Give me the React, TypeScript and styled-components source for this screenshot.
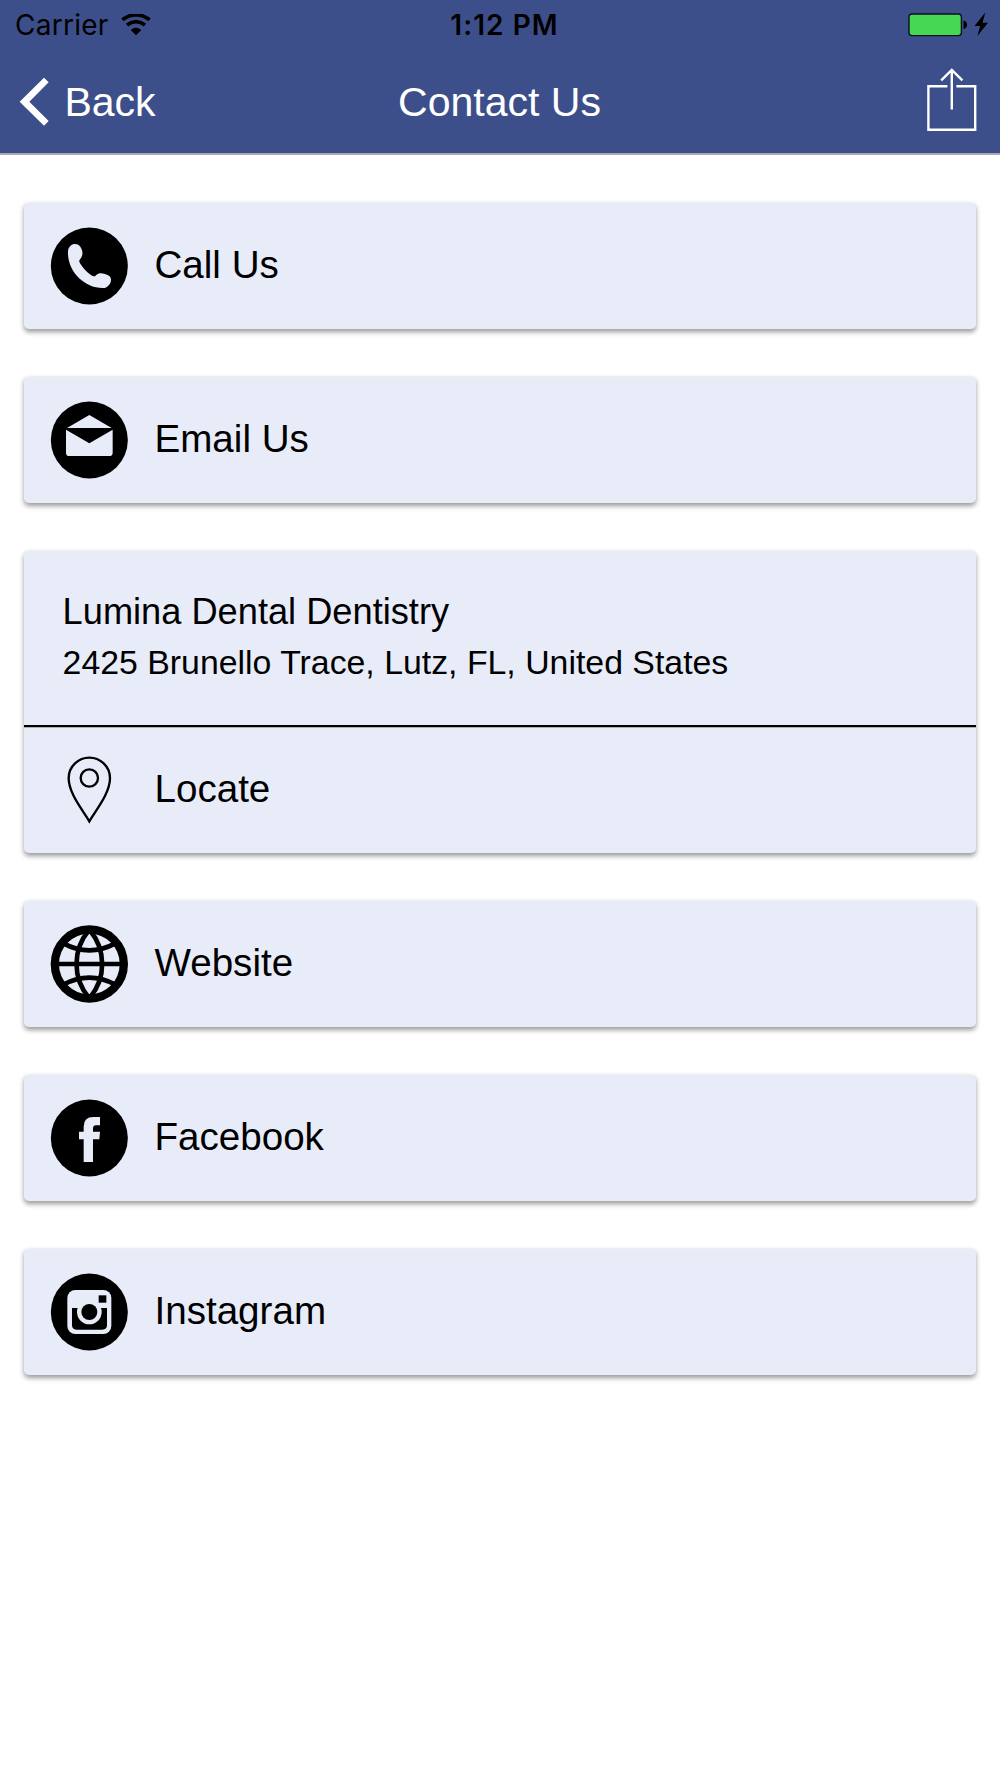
import React from "react";
import styled, { createGlobalStyle } from "styled-components";

const GlobalStyle = createGlobalStyle`
  *, *::before, *::after { box-sizing: border-box; }
  body {
    margin: 0;
    background: #fff;
    color: #000;
    font-family: "Liberation Sans", Arial, Helvetica, sans-serif;
  }
`;

const Screen = styled.div`
  width: 1000px;
  min-height: 1778px;
  background: #fff;
`;

const Header = styled.header`
  height: 155px;
  background: #3d4f8a;
  border-bottom: 2px solid #a9a9ae;
`;

const StatusBar = styled.div`
  display: grid;
  grid-template-columns: 1fr auto 1fr;
  align-items: center;
  height: 50px;
  padding: 0 12px 0 15px;
  font-family: Inter, Roboto, sans-serif;
  font-size: 28px;
  line-height: 48px;
`;

const StatusLeft = styled.div`
  display: flex;
  align-items: center;
  gap: 12px;
`;

const Carrier = styled.span`
  letter-spacing: 0.25px;
`;

const Clock = styled.span`
  font-weight: 600;
  letter-spacing: 1.05px;
  padding: 0 0 0 6px;
`;

const StatusRight = styled.div`
  display: flex;
  align-items: center;
  justify-content: flex-end;
`;

const NavBar = styled.nav`
  display: grid;
  grid-template-columns: 1fr auto 1fr;
  align-items: center;
  height: 103px;
  padding: 0 22px 0 19px;
  color: #fff;
  font-size: 41.06px;
`;

const NavButton = styled.button<{ $end?: boolean }>`
  display: flex;
  align-items: center;
  gap: 15.4px;
  justify-self: ${(p) => (p.$end ? "end" : "start")};
  padding: ${(p) => (p.$end ? "0 0 4px" : "0")};
  border: 0;
  background: none;
  color: inherit;
  font: inherit;
`;

const ButtonLabel = styled.span`
  padding-top: 2px;
`;

const Title = styled.h1`
  margin: 0;
  padding: 2px 0 0 2px;
  font-size: inherit;
  font-weight: 400;
`;

const List = styled.main`
  display: flex;
  flex-direction: column;
  gap: 47.9px;
  padding: 47.7px 24px 0;
`;

const Card = styled.section`
  border-radius: 4.8px;
  background: #e8ecf9;
  box-shadow: 0 2.4px 4.8px rgba(0, 0, 0, 0.4);
`;

const Row = styled.a`
  display: flex;
  align-items: center;
  gap: 26.2px;
  height: 126.1px;
  padding-left: 26.3px;
`;

const RowLabel = styled.span`
  font-size: 38.6px;
  line-height: 46px;
  padding-bottom: 1.8px;
`;

const Address = styled.div`
  height: 176.2px;
  padding: 35.4px 38.6px 0;
  border-bottom: 2px solid #000;
  box-shadow: 0 1px 0 rgba(0, 0, 0, 0.25);
`;

const AddressLine = styled.div<{ $size: number }>`
  font-size: ${(p) => p.$size}px;
  line-height: 51px;
  white-space: nowrap;
`;

const RoundIcon = styled.svg`
  display: block;
  flex: none;
  width: 78px;
  height: 78px;
`;

const Glyph = styled.svg`
  display: block;
  flex: none;
`;

const PAPER = "#e8ecf9";

const Disc = ({ children }: { children: React.ReactNode }) => (
  <RoundIcon viewBox="-118 -117 234 234">
    <circle r="115.5" />
    {children}
  </RoundIcon>
);

const PhoneIcon = () => (
  <Disc>
    <path
      fill={PAPER}
      d="M-64-44C-63-58-53-66-43-66C-31-66-25-57-22-47C-19-37-21-29-27-21Q-31-17-30-13C-24 2-2 25 13 31Q17 32 21 27C27 20 38 21 47 24C58 27 65 32 65 41C65 52 57 62 46 66C20 68-13 58-39 28C-57 6-65-20-64-44Z"
    />
  </Disc>
);

const MailIcon = () => (
  <Disc>
    <path fill={PAPER} d="M-67-36L0-75L67-36Z" />
    <path fill={PAPER} d="M-70-31L0 10L70-31V38Q70 48 60 48H-60Q-70 48-70 38Z" />
  </Disc>
);

const PinIcon = () => (
  <RoundIcon viewBox="-118 -117 234 234" fill="none" stroke="#000" strokeWidth="7">
    <path d="M0 94C-20 60-62 10-62-35C-62-72-32-97 0-97C32-97 62-72 62-35C62 10 20 60 0 94Z" />
    <circle cy="-36" r="26" />
  </RoundIcon>
);

const GlobeIcon = () => (
  <RoundIcon viewBox="-118 -117 234 234" fill="none" stroke="#000" strokeWidth="14">
    <circle r="103.5" strokeWidth="25" />
    <path d="M-96 0H96M-1-102C-51-42-51 42-1 102M1-102C51-42 51 42 1 102" />
    <path d="M-78-62Q0-20 78-62M-78 62Q0 20 78 62" />
  </RoundIcon>
);

const FacebookIcon = () => (
  <Disc>
    <path
      fill={PAPER}
      d="M32-63V-38H20Q11-38 11-29V-19H32L30 4H11V72H-17V4H-31V-19H-17V-34Q-17-63 12-63Z"
    />
  </Disc>
);

const InstagramIcon = () => (
  <Disc>
    <rect x="-66" y="-66" width="132" height="132" rx="24" fill={PAPER} />
    <path d="M-52-12H53V39Q53 53 39 53H-38Q-52 53-52 39Z" />
    <circle r="37" fill={PAPER} />
    <circle r="24" />
    <rect x="28" y="-50" width="23" height="22" />
  </Disc>
);

const WifiIcon = () => (
  <Glyph width="30" height="23" viewBox="0 2 90 69">
    <path fill="none" stroke="#000" strokeWidth="11" d="M4 19Q45-10 86 19M18 35Q45 15 72 35" />
    <path d="M45 66L29 50Q45 37 61 50Z" />
  </Glyph>
);

const BatteryIcon = () => (
  <Glyph width="80" height="26" viewBox="0 0 80 26">
    <rect x="1" y="2" width="52.4" height="21.6" rx="3" fill="#46d754" stroke="#0b1020" strokeWidth="1.4" />
    <path d="M55.5 8.6Q59 9.5 59 12.7Q59 16 55.5 17Z" />
    <path d="M77.3 0.5L66.5 14H72.2L69.4 24L80 10.8H74.5Z" />
  </Glyph>
);

const ChevronIcon = () => (
  <Glyph width="30" height="49" viewBox="0 0 90 147">
    <path fill="#fff" d="M2 74L75 2L89 16L31 74L89 132L75 146Z" />
  </Glyph>
);

const ShareIcon = () => (
  <Glyph width="52" height="66" viewBox="0 0 52 66" fill="none" stroke="#fff">
    <path strokeWidth="2.4" d="M21.4 19.2H2.4V62.8H49.2V19.2H30.4" />
    <path strokeWidth="2.4" d="M25.8 42.5V4M15.2 13.4L25.8 3L36.4 13.4" />
  </Glyph>
);

const LinkCard = ({ icon, label }: { icon: React.ReactNode; label: string }) => (
  <Card>
    <Row>
      {icon}
      <RowLabel>{label}</RowLabel>
    </Row>
  </Card>
);

export default function App() {
  return (
    <Screen>
      <GlobalStyle />
      <Header>
        <StatusBar>
          <StatusLeft>
            <Carrier>Carrier</Carrier>
            <WifiIcon />
          </StatusLeft>
          <Clock>1:12 PM</Clock>
          <StatusRight>
            <BatteryIcon />
          </StatusRight>
        </StatusBar>
        <NavBar>
          <NavButton>
            <ChevronIcon />
            <ButtonLabel>Back</ButtonLabel>
          </NavButton>
          <Title>Contact Us</Title>
          <NavButton $end aria-label="Share">
            <ShareIcon />
          </NavButton>
        </NavBar>
      </Header>
      <List>
        <LinkCard icon={<PhoneIcon />} label="Call Us" />
        <LinkCard icon={<MailIcon />} label="Email Us" />
        <Card>
          <Address>
            <AddressLine $size={36.23}>Lumina Dental Dentistry</AddressLine>
            <AddressLine $size={33.85}>2425 Brunello Trace, Lutz, FL, United States</AddressLine>
          </Address>
          <Row>
            <PinIcon />
            <RowLabel>Locate</RowLabel>
          </Row>
        </Card>
        <LinkCard icon={<GlobeIcon />} label="Website" />
        <LinkCard icon={<FacebookIcon />} label="Facebook" />
        <LinkCard icon={<InstagramIcon />} label="Instagram" />
      </List>
    </Screen>
  );
}
